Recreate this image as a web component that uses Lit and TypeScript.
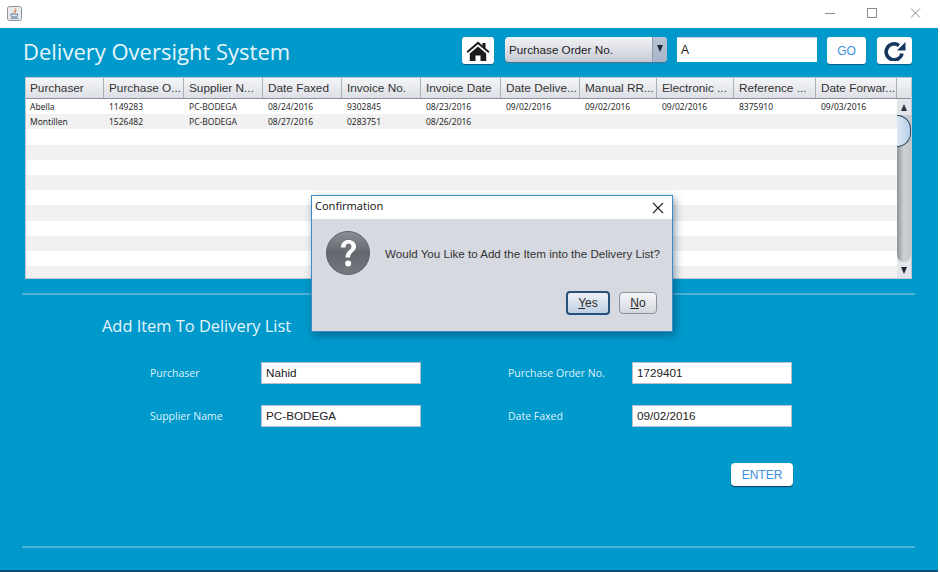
import { LitElement, html, css, svg } from "lit";
import { customElement } from "lit/decorators.js";

const COLS = [78, 80, 79, 79, 79, 80, 79, 77, 77, 82, 81];
const HEADERS = ["Purchaser", "Purchase O...", "Supplier N...", "Date Faxed", "Invoice No.", "Invoice Date", "Date Delive...", "Manual RR...", "Electronic ...", "Reference ...", "Date Forwar..."];
const ROWS = [
  ["Abella", "1149283", "PC-BODEGA", "08/24/2016", "9302845", "08/23/2016", "09/02/2016", "09/02/2016", "09/02/2016", "8375910", "09/03/2016"],
  ["Montillen", "1526482", "PC-BODEGA", "08/27/2016", "0283751", "08/26/2016", "", "", "", "", ""],
  ...Array.from({ length: 10 }, () => Array(11).fill("")),
];
const gridCols = COLS.map((c) => c + "px").join(" ");

function gridColsCss() {
  return css([gridCols] as unknown as TemplateStringsArray);
}

@customElement("app-root")
export class AppRoot extends LitElement {
  static styles = css`
    :host {
      display: block;
      width: 940px;
      height: 572px;
      background: #fff;
      font-family: "Liberation Sans", Arial, sans-serif;
      overflow: hidden;
      position: relative;
    }
    .titlebar {
      height: 28px;
      display: flex;
      align-items: center;
      padding: 0 18px 0 7px;
      box-sizing: border-box;
    }
    .java { width: 15px; height: 15px; margin-top: -2px; }
    .winctl { margin-left: auto; display: block; margin-top: -2px; }
    .main {
      width: 938px;
      height: 544px;
      box-sizing: border-box;
      background: #0099cc;
      border-bottom: 2px solid #0b4f73;
      padding: 9px 26px 0 22px;
      display: flex;
      flex-direction: column;
    }
    .top {
      height: 27px;
      display: flex;
      align-items: flex-start;
    }
    .title {
      font-family: "Open Sans", sans-serif;
      font-size: 22px;
      line-height: 28px;
      color: #e8f6fb;
      margin-left: 1px;
      flex: 1;
      white-space: nowrap;
    }
    .btn {
      box-sizing: border-box;
      height: 27px;
      background: #fff;
      border-radius: 3px;
      display: flex;
      align-items: center;
      justify-content: center;
      box-shadow: 0 1px 1px #0b5f86;
      color: #3d8fe0;
      font-size: 12px;
    }
    .home { width: 32px; margin-right: 11px; }
    .combo {
      width: 162px;
      height: 25px;
      box-sizing: border-box;
      border-radius: 4px;
      background: linear-gradient(#f2f3f6, #d9dce3 60%, #c5c9d3);
      box-shadow: 0 1px 1px #4a6f8c;
      display: flex;
      align-items: center;
      font-size: 11.7px;
      color: #222;
      padding-left: 4px;
      margin-right: 10px;
    }
    .combo .label { flex: 1; }
    .arrow {
      width: 15px;
      height: 25px;
      background: linear-gradient(#b9c4d4, #a7b4c8);
      border-left: 1px solid #8f9bb0;
      border-radius: 0 4px 4px 0;
      display: flex;
      align-items: center;
      justify-content: center;
      padding-bottom: 3px;
      box-sizing: border-box;
    }
    .down, .up {
      width: 0;
      height: 0;
      border-left: 3.5px solid transparent;
      border-right: 3.5px solid transparent;
    }
    .down { border-top: 7px solid #1d2733; }
    .up { border-bottom: 7px solid #2c3642; }
    .search {
      width: 140px;
      height: 25px;
      box-sizing: border-box;
      background: #fff;
      border-top: 1px solid #c9ccd2;
      font-size: 12px;
      color: #222;
      padding: 5px 0 0 4px;
      margin-right: 10px;
    }
    .go { width: 39px; margin-right: 11px; }
    .refresh { width: 35px; }
    .table {
      margin-top: 13px;
      margin-left: 3px;
      width: 887px;
      height: 202px;
      box-sizing: border-box;
      background: #e6e8ec;
      border: 1px solid #c2c6cf;
      display: flex;
      flex-direction: column;
      overflow: hidden;
    }
    .thead {
      display: grid;
      grid-template-columns: ${gridColsCss()} 1fr;
      height: 21px;
      flex: none;
      border-bottom: 1px solid #8a8f99;
      box-sizing: border-box;
      background: linear-gradient(#f4f5f7, #dcdfe5);
    }
    .th {
      font-size: 11.8px;
      line-height: 20px;
      color: #333;
      padding-left: 5px;
      border-right: 1px solid #a9aeb9;
      white-space: nowrap;
      overflow: hidden;
    }
    .th:first-child, .td:first-child { padding-left: 4px; }
    .th:last-child { border-right: 0; }
    .tbody { display: flex; flex: 1; min-height: 0; }
    .rows { width: 871px; flex: none; overflow: hidden; }
    .row {
      display: grid;
      grid-template-columns: ${gridColsCss()};
      height: 15.2px;
      background: #fff;
    }
    .row.alt { background: #f1f1f1; }
    .td {
      font-family: "Noto Sans", sans-serif;
      font-size: 8.5px;
      line-height: 15px;
      color: #2a2a2a;
      padding-left: 5px;
      white-space: nowrap;
    }
    .scroll {
      width: 15px;
      display: flex;
      flex-direction: column;
      background: #e2e5ea;
    }
    .sbtn {
      height: 16px;
      flex: none;
      display: flex;
      align-items: center;
      justify-content: center;
    }
    .track {
      flex: 1;
      position: relative;
      background: linear-gradient(90deg, #8f9399, #cfd1d6 50%, #c4c6cb);
      border-radius: 0 0 8px 8px;
    }
    .thumb {
      position: absolute;
      top: 0;
      left: 0;
      width: 14px;
      height: 32px;
      box-sizing: border-box;
      background: linear-gradient(90deg, #dbe7f3, #b8d0e8);
      border: 1px solid #2d4b68;
      border-left: 0;
      border-radius: 0 14px 14px 0;
    }
    .rule {
      height: 2px;
      flex: none;
      background: #4fb3d6;
      width: 893px;
    }
    .r1 { margin-top: 14px; }
    .heading {
      font-family: "Open Sans", sans-serif;
      font-size: 16.4px;
      line-height: 24px;
      color: #e4f4fa;
      margin: 19px 0 0 80px;
    }
    .form {
      display: grid;
      grid-template-columns: 111px 160px 87px 124px 160px;
      grid-auto-rows: 22px;
      row-gap: 21px;
      margin: 24px 0 0 128px;
      align-items: center;
    }
    .lbl {
      font-family: "Open Sans", sans-serif;
      font-size: 10.5px;
      color: #dff2f9;
      white-space: nowrap;
    }
    .input {
      height: 22px;
      box-sizing: border-box;
      background: #fff;
      border: 1px solid #b9bfc8;
      font-size: 11.7px;
      color: #222;
      line-height: 20px;
      padding-left: 4px;
    }
    .enter {
      flex: none;
      width: 62px;
      height: 23px;
      margin: 36px 0 0 709px;
      border-radius: 4px;
      box-shadow: 0 1px 1px #123a5c;
    }
    .r2 { margin-top: 60px; }
    .dialog {
      position: absolute;
      left: 311px;
      top: 195px;
      width: 362px;
      height: 137px;
      box-sizing: border-box;
      background: #d6d9e0;
      border: 1px solid #3e8cc4;
      box-shadow: 2px 3px 8px rgba(0, 40, 70, 0.45);
      display: flex;
      flex-direction: column;
    }
    .dhead {
      height: 23px;
      flex: none;
      background: #fff;
      display: flex;
      align-items: center;
      justify-content: space-between;
      padding: 0 8px 5px 3px;
      box-sizing: border-box;
      font-family: "Noto Sans", sans-serif;
      font-size: 11px;
      color: #222;
    }
    .dhead svg { margin-top: 5px; }
    .dbody {
      display: flex;
      align-items: center;
      padding: 12px 0 0 14px;
      gap: 15px;
      font-size: 11.6px;
      color: #333;
      white-space: nowrap;
    }
    .dbtns {
      display: flex;
      justify-content: flex-end;
      align-items: center;
      gap: 9px;
      padding: 16px 15px 0 0;
    }
    .dbtn {
      box-sizing: border-box;
      height: 22px;
      width: 38px;
      border: 1px solid #8a92a0;
      border-radius: 4px;
      background: linear-gradient(#f5f6f8, #d3d6dd);
      font-size: 12px;
      color: #2a2a2a;
      display: flex;
      align-items: center;
      justify-content: center;
    }
    .dbtn.def {
      width: 44px;
      height: 24px;
      border: 2px solid #274f7c;
      background: linear-gradient(#eef2f7, #bfd0e3);
    }
    u { text-underline-offset: 1px; }
  `;

  render() {
    return html`
      <div class="titlebar">
        ${this.javaIcon()}
        <svg class="winctl" width="97" height="12" viewBox="0 0 97 12" fill="none" stroke="#8c8c8c" stroke-width="1">
          <path d="M0 6.5h10" />
          <rect x="42.5" y="1.5" width="9" height="9" />
          <path d="M86 1.5l9 9M95 1.5l-9 9" />
        </svg>
      </div>
      <div class="main">
        <div class="top">
          <div class="title">Delivery Oversight System</div>
          <div class="btn home">${this.homeIcon()}</div>
          <div class="combo">
            <span class="label">Purchase Order No.</span>
            <span class="arrow"><span class="down"></span></span>
          </div>
          <div class="search">A</div>
          <div class="btn go">GO</div>
          <div class="btn refresh">${this.refreshIcon()}</div>
        </div>
        <div class="table">
          <div class="thead">
            ${HEADERS.map((h) => html`<div class="th">${h}</div>`)}
            <div class="th"></div>
          </div>
          <div class="tbody">
            <div class="rows">
              ${ROWS.map(
                (r, i) => html`<div class="row ${i % 2 ? "alt" : ""}">
                  ${r.map((c) => html`<div class="td">${c}</div>`)}
                </div>`
              )}
            </div>
            <div class="scroll">
              <div class="sbtn"><span class="up"></span></div>
              <div class="track"><div class="thumb"></div></div>
              <div class="sbtn"><span class="down"></span></div>
            </div>
          </div>
        </div>
        <div class="rule r1"></div>
        <div class="heading">Add Item To Delivery List</div>
        <div class="form">
          <div class="lbl">Purchaser</div>
          <div class="input">Nahid</div>
          <div></div>
          <div class="lbl">Purchase Order No.</div>
          <div class="input">1729401</div>
          <div class="lbl">Supplier Name</div>
          <div class="input">PC-BODEGA</div>
          <div></div>
          <div class="lbl">Date Faxed</div>
          <div class="input">09/02/2016</div>
        </div>
        <div class="btn enter">ENTER</div>
        <div class="rule r2"></div>
      </div>
      <div class="dialog">
        <div class="dhead">
          <span>Confirmation</span>
          <svg width="12" height="12" viewBox="0 0 12 12" fill="none" stroke="#222" stroke-width="1.1"><path d="M1 1l10 10M11 1L1 11" /></svg>
        </div>
        <div class="dbody">
          ${this.questionIcon()}
          <span>Would You Like to Add the Item into the Delivery List?</span>
        </div>
        <div class="dbtns">
          <div class="dbtn def"><span><u>Y</u>es</span></div>
          <div class="dbtn"><span><u>N</u>o</span></div>
        </div>
      </div>
    `;
  }

  javaIcon() {
    return html`<svg class="java" viewBox="0 0 15 15">
      <rect x="0.5" y="0.5" width="14" height="14" rx="2" fill="#e9ebee" stroke="#8d939c" />
      ${svg`<path d="M8.5 2.5C9 4 6.5 4.5 7 6.5M9.5 4C8.5 5 8 5.5 8.6 6.8" fill="none" stroke="#e0762a" stroke-width="1" />
      <path d="M4 8h6.5v1.5c0 1-1 1.5-3.2 1.5S4 10.5 4 9.5zM3.5 12.2h8" fill="none" stroke="#5b7896" stroke-width="1" />`}
    </svg>`;
  }

  homeIcon() {
    return html`<svg width="24" height="20" viewBox="0 0 24 20">
      <path d="M12 0.5L0.5 10.5l1.2 1.5L12 3.2l10.3 8.8 1.2-1.5L19.5 7V2h-3v2.5z" fill="#1c1c1c" />
      <path d="M12 5.5L3.8 12.5V20H9.5v-5.5h5V20h5.7v-7.5z" fill="#1c1c1c" />
    </svg>`;
  }

  refreshIcon() {
    return html`<svg width="22" height="20" viewBox="0 0 22 20">
      <path d="M18 12.500A8 8 0 1 1 15 4.500" fill="none" stroke="#16385f" stroke-width="3.6" />
      <path d="M13 9.5H21.5V1z" fill="#16385f" />
    </svg>`;
  }

  questionIcon() {
    return html`<svg width="44" height="44" viewBox="0 0 44 44">
      <defs>
        <linearGradient id="q" x1="0" y1="0" x2="0" y2="1">
          <stop offset="0" stop-color="#8b8f96" />
          <stop offset="0.5" stop-color="#63676e" />
          <stop offset="1" stop-color="#74787f" />
        </linearGradient>
      </defs>
      <circle cx="22" cy="22" r="21.5" fill="url(#q)" stroke="#5a5e65" />
      <path d="M15 16.5c0-5 3.5-7.5 7.5-7.5s7.5 2.5 7.5 6.5c0 5.5-6 5.5-6 11h-4.500c0-7 6-7 6-11 0-1.800-1.300-3-3-3-2 0-3 1.500-3 4z" fill="#fff" />
      <circle cx="22.2" cy="32.5" r="3" fill="#fff" />
    </svg>`;
  }
}
